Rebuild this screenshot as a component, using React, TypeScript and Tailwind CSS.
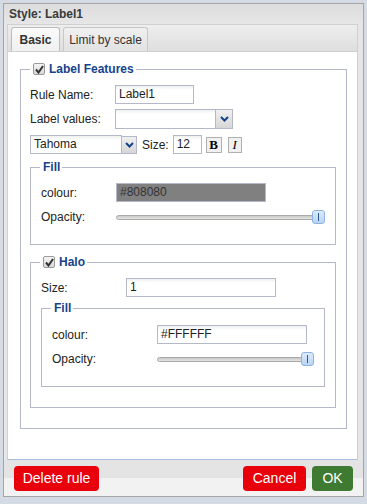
import React from "react";

const inputCls =
  "h-[19px] border border-[#b5b8c8] bg-[linear-gradient(to_bottom,#eef1f1,#ffffff_4px)] px-[3px] text-[12px] leading-[17px] text-[#222]";

function Check() {
  return (
    <span className="flex h-[12px] w-[12px] items-center justify-center rounded-[2px] border border-[#9a9a9a] bg-[linear-gradient(to_bottom,#f4f4f4,#d8d8d8)]">
      <svg width="9" height="9" viewBox="0 0 9 9">
        <path d="M1 4.5 L3.5 7.5 L8 1" fill="none" stroke="#333" strokeWidth="2" />
      </svg>
    </span>
  );
}

function Chevron() {
  return (
    <svg width="9" height="6" viewBox="0 0 9 6">
      <path d="M1 1 L4.5 4.5 L8 1" fill="none" stroke="#15428b" strokeWidth="2" />
    </svg>
  );
}

function Slider({ width }: { width: number }) {
  return (
    <div className="relative h-[14px]" style={{ width }}>
      <div className="absolute left-0 right-[4px] top-[5px] h-[5px] rounded-[3px] border border-[#a9a9a9] bg-[linear-gradient(to_bottom,#c8c8c8,#e4e4e0)]" />
      <div className="absolute right-0 top-0 flex h-[14px] w-[13px] items-center justify-center rounded-[3px] border border-[#8eb4e6] bg-[linear-gradient(to_bottom,#dceafb,#b9d4f4)]">
        <div className="h-[8px] w-[1px] bg-[#2f5a9a]" />
      </div>
    </div>
  );
}

function Legend({ children, ml = "ml-[9px]" }: { children: React.ReactNode; ml?: string }) {
  return (
    <legend className={`${ml} flex items-center gap-[4px] pl-[3px] pr-[2px] text-[12px] font-bold leading-[14px] text-[#15428b]`}>
      {children}
    </legend>
  );
}

export default function App() {
  return (
    <div className="h-[504px] w-[367px] overflow-hidden bg-[#d5dbe5] pl-[3px] pt-[3px] font-['Liberation_Sans',Arial,sans-serif] text-[12px] leading-[14px] text-[#222]">
      <div className="flex w-[361px] flex-col border border-[#a6a6a6] bg-[#e6e6e6]">
        {/* Title */}
        <div className="flex h-[20px] items-center bg-[linear-gradient(to_bottom,#dcdcdc,#e6e6e6)] pl-[5px] text-[12px] font-bold text-[#3a3a3a]">
          Style: Label1
        </div>

        <div className="pl-[3px] pr-[5px]">
          {/* Tabs */}
          <div className="flex h-[27px] items-end gap-[3px] border border-b-0 border-[#d0d0d0] bg-[linear-gradient(to_bottom,#eeeeee,#dedede)] pl-[3px]">
            <div className="flex h-[24px] w-[49px] items-center justify-center rounded-t-[3px] border border-b-0 border-[#bcbcbc] bg-[linear-gradient(to_bottom,#fafafa,#f0f0f0)] font-bold text-[#333]">
              Basic
            </div>
            <div className="flex h-[24px] w-[85px] items-center justify-center rounded-t-[3px] border border-b-0 border-[#c8c8c8] bg-[linear-gradient(to_bottom,#f0f0f0,#e2e2e2)] text-[#333]">
              Limit by scale
            </div>
          </div>

          {/* Panel */}
          <div className="h-[409px] border border-t-[#d0d0d0] border-x-[#d0d0d0] border-b-[#a8bfe0] bg-white pl-[12px] pr-[10px] pt-[10px]">
            <fieldset className="border border-[#b5b8c8]">
              <Legend>
                <Check />
                <span>Label Features</span>
              </Legend>
              <div className="flex flex-col pb-[20px] pl-[9px] pr-[10px] pt-[9px]">
                <div className="flex items-center">
                  <span className="w-[85px]">Rule Name:</span>
                  <div className={`${inputCls} w-[79px]`}>Label1</div>
                </div>
                <div className="mt-[5px] flex items-center">
                  <span className="w-[85px]">Label values:</span>
                  <div className={`${inputCls} h-[20px] w-[101px]`} />
                  <div className="flex h-[20px] w-[17px] items-center justify-center border border-l-0 border-[#b5b8c8] bg-[linear-gradient(to_bottom,#f0f0f0,#d6d6d6)]">
                    <Chevron />
                  </div>
                </div>
                <div className="mt-[6px] flex items-center">
                  <div className={`${inputCls} h-[18px] w-[92px] leading-[16px]`}>Tahoma</div>
                  <div className="flex h-[18px] w-[15px] items-center justify-center border border-l-0 border-[#b5b8c8] bg-[linear-gradient(to_bottom,#f0f0f0,#d6d6d6)]">
                    <Chevron />
                  </div>
                  <span className="ml-[5px]">Size:</span>
                  <div className={`${inputCls} ml-[4px] h-[17px] w-[29px] leading-[15px]`}>12</div>
                  <div className="ml-[4px] flex h-[16px] w-[16px] items-center justify-center border border-[#b0b0b0] bg-[#f0f0f0] font-['Liberation_Serif',serif] text-[13px] font-bold leading-none text-black">
                    B
                  </div>
                  <div className="ml-[6px] flex h-[16px] w-[14px] items-center justify-center border border-[#b0b0b0] bg-[#f0f0f0] font-['Liberation_Serif',serif] text-[13px] italic leading-none text-black">
                    I
                  </div>
                </div>

                {/* Fill */}
                <fieldset className="mt-[6px] border border-[#b5b8c8]">
                  <Legend>Fill</Legend>
                  <div className="flex flex-col pb-[20px] pl-[10px] pt-[9px]">
                    <div className="flex items-center">
                      <span className="w-[75px]">colour:</span>
                      <div className="h-[19px] w-[150px] border border-[#b5b8c8] bg-[#808080] px-[3px] text-[12px] leading-[17px] text-[#333]">
                        #808080
                      </div>
                    </div>
                    <div className="mt-[8px] flex items-center">
                      <span className="w-[75px]">Opacity:</span>
                      <Slider width={209} />
                    </div>
                  </div>
                </fieldset>

                {/* Halo */}
                <fieldset className="mt-[10px] border border-[#b5b8c8]">
                  <Legend>
                    <Check />
                    <span>Halo</span>
                  </Legend>
                  <div className="flex flex-col pb-[20px] pl-[10px] pr-[10px] pt-[9px]">
                    <div className="flex items-center">
                      <span className="w-[85px]">Size:</span>
                      <div className={`${inputCls} w-[150px]`}>1</div>
                    </div>
                    <fieldset className="mt-[4px] border border-[#b5b8c8]">
                      <Legend>Fill</Legend>
                      <div className="flex flex-col pb-[20px] pl-[10px] pt-[10px]">
                        <div className="flex items-center">
                          <span className="w-[105px]">colour:</span>
                          <div className={`${inputCls} w-[150px]`}>#FFFFFF</div>
                        </div>
                        <div className="mt-[8px] flex items-center">
                          <span className="w-[105px]">Opacity:</span>
                          <Slider width={157} />
                        </div>
                      </div>
                    </fieldset>
                  </div>
                </fieldset>
              </div>
            </fieldset>
          </div>
        </div>

        {/* Footer */}
        <div className="flex h-[36px] items-center bg-[linear-gradient(to_bottom,#e4e4e4_0,#e4e4e4_50%,#f2f2f2_50%,#f2f2f2_100%)] px-[10px]">
          <button className="h-[25px] w-[85px] rounded-[4px] bg-[#e8000b] text-[14px] text-white">Delete rule</button>
          <div className="flex-1" />
          <button className="h-[25px] w-[63px] rounded-[4px] bg-[#e8000b] text-[14px] text-white">Cancel</button>
          <button className="ml-[6px] h-[25px] w-[41px] rounded-[4px] bg-[#3f7a33] text-[14px] text-white">OK</button>
        </div>
      </div>
    </div>
  );
}
